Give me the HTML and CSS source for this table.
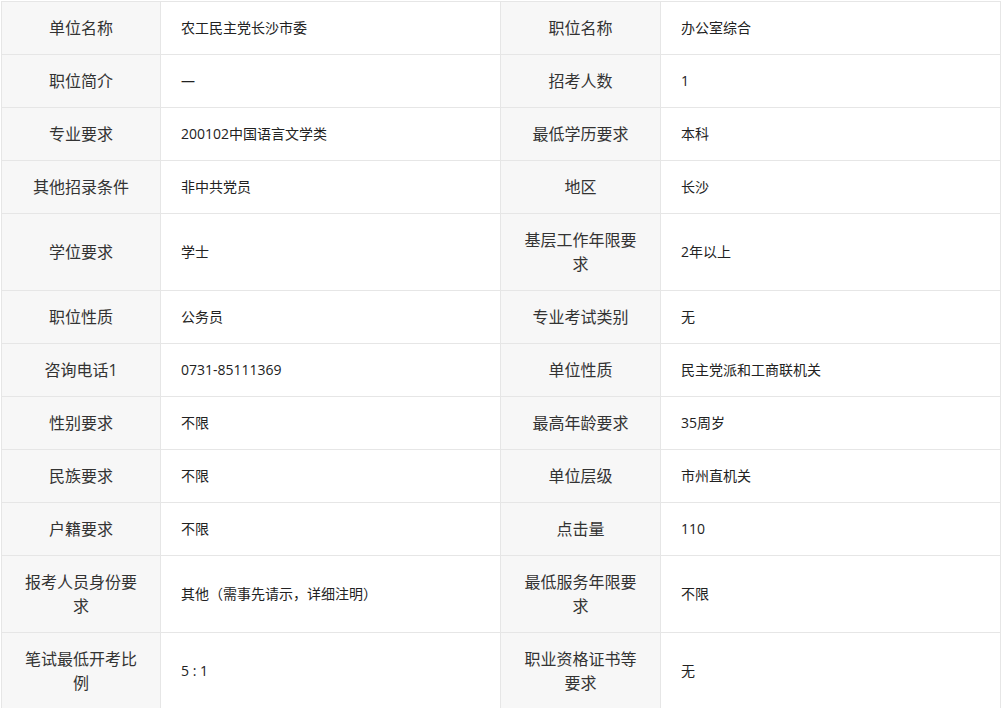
FILE: index.html
```html
<!DOCTYPE html>
<html lang="zh-CN">
<head>
<meta charset="utf-8">
<title>职位详情</title>
<link rel="stylesheet" href="styles.css">
</head>
<body>
<table class="info">
  <colgroup>
    <col class="c-label"><col class="c-value"><col class="c-label2"><col class="c-value">
  </colgroup>
  <tbody>
    <tr><th>单位名称</th><td>农工民主党长沙市委</td><th>职位名称</th><td>办公室综合</td></tr>
    <tr><th>职位简介</th><td>—</td><th>招考人数</th><td>1</td></tr>
    <tr><th>专业要求</th><td>200102中国语言文学类</td><th>最低学历要求</th><td>本科</td></tr>
    <tr><th>其他招录条件</th><td>非中共党员</td><th>地区</th><td>长沙</td></tr>
    <tr><th>学位要求</th><td>学士</td><th>基层工作年限要求</th><td>2年以上</td></tr>
    <tr><th>职位性质</th><td>公务员</td><th>专业考试类别</th><td>无</td></tr>
    <tr><th>咨询电话1</th><td>0731-85111369</td><th>单位性质</th><td>民主党派和工商联机关</td></tr>
    <tr><th>性别要求</th><td>不限</td><th>最高年龄要求</th><td>35周岁</td></tr>
    <tr><th>民族要求</th><td>不限</td><th>单位层级</th><td>市州直机关</td></tr>
    <tr><th>户籍要求</th><td>不限</td><th>点击量</th><td>110</td></tr>
    <tr><th>报考人员身份要求</th><td class="centered-punct">其他（需事先请示，详细注明）</td><th>最低服务年限要求</th><td>不限</td></tr>
    <tr><th>笔试最低开考比例</th><td>5 : 1</td><th>职业资格证书等要求</th><td>无</td></tr>
  </tbody>
</table>
</body>
</html>
```

FILE: styles.css
```css
html, body {
  margin: 0;
  padding: 0;
  background: #ffffff;
}

body {
  padding: 1px 0 0 1px;
  font-family: "Open Sans", "Noto Sans CJK SC", sans-serif;
  color: #333333;
}

.info {
  border-collapse: collapse;
  table-layout: fixed;
  width: 1000px;
}

.c-label { width: 159px; }
.c-label2 { width: 160px; }
.c-value { width: 340px; }

.info th,
.info td {
  border: 1px solid #e6e6e6;
  padding: 14px 20px;
  vertical-align: middle;
}

.info th {
  background: #f7f7f7;
  font-weight: normal;
  font-size: 16px;
  line-height: 24px;
  text-align: center;
  padding-left: 18px;
  padding-right: 18px;
}

.info td {
  font-size: 14px;
  line-height: 20px;
  text-align: left;
  color: #222222;
}

.info td.centered-punct {
  font-family: "Open Sans", "Noto Sans CJK TC", sans-serif;
}
```
